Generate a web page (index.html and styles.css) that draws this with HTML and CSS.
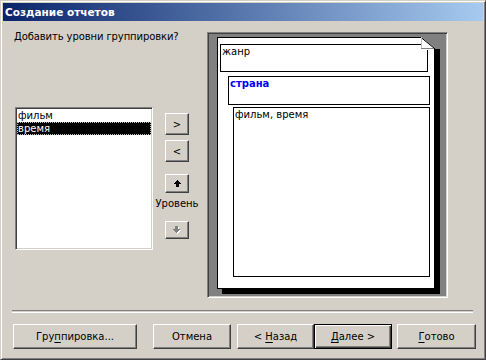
FILE: index.html
```html
<!DOCTYPE html>
<html lang="ru">
<head>
    <meta charset="UTF-8">
    <meta name="viewport" content="width=device-width, initial-scale=1.0">
    <title>Создание отчетов</title>
    <link rel="stylesheet" href="styles.css">
</head>
<body>
    <div class="window">
        <div class="titlebar">Создание отчетов</div>

        <div class="main">
            <div class="left">
                <p class="prompt">Добавить уровни группировки?</p>
                <div class="picker">
                    <ul class="listbox">
                        <li>фильм</li>
                        <li class="selected"><span>время</span></li>
                    </ul>
                    <div class="level-controls">
                        <button class="btn small btn-add">&gt;</button>
                        <button class="btn small btn-remove">&lt;</button>
                        <button class="btn small btn-up">
                            <svg width="7" height="7" viewBox="0 0 7 7" shape-rendering="crispEdges">
                                <rect x="3" y="0" width="1" height="1" fill="#000"/>
                                <rect x="2" y="1" width="3" height="1" fill="#000"/>
                                <rect x="1" y="2" width="5" height="1" fill="#000"/>
                                <rect x="0" y="3" width="7" height="1" fill="#000"/>
                                <rect x="2" y="4" width="3" height="3" fill="#000"/>
                            </svg>
                        </button>
                        <span class="level-label">Уровень</span>
                        <button class="btn small btn-down" disabled>
                            <svg width="8" height="8" viewBox="0 0 8 8" shape-rendering="crispEdges">
                                <rect x="3" y="1" width="3" height="3" fill="#fff"/>
                                <rect x="1" y="4" width="7" height="1" fill="#fff"/>
                                <rect x="2" y="5" width="5" height="1" fill="#fff"/>
                                <rect x="3" y="6" width="3" height="1" fill="#fff"/>
                                <rect x="4" y="7" width="1" height="1" fill="#fff"/>
                                <rect x="2" y="0" width="3" height="3" fill="#808080"/>
                                <rect x="0" y="3" width="7" height="1" fill="#808080"/>
                                <rect x="1" y="4" width="5" height="1" fill="#808080"/>
                                <rect x="2" y="5" width="3" height="1" fill="#808080"/>
                                <rect x="3" y="6" width="1" height="1" fill="#808080"/>
                            </svg>
                        </button>
                    </div>
                </div>
            </div>

            <div class="preview">
                <div class="page">
                    <svg class="fold" width="19" height="13" viewBox="0 0 19 13" shape-rendering="crispEdges">
                        <rect x="0" y="0" width="19" height="13" fill="#808080"/>
                        <polygon points="0,0 14,11.5 14,13 0,13" fill="#fff" shape-rendering="auto"/>
                        <line x1="0" y1="0.5" x2="13.5" y2="11.5" stroke="#000" stroke-width="1" shape-rendering="auto"/>
                        <rect x="13" y="11" width="1" height="2" fill="#000"/>
                        <rect x="0" y="0" width="1" height="11" fill="#c0c0c0"/>
                        <rect x="0" y="11" width="13" height="1" fill="#808080"/>
                        <rect x="14" y="12" width="5" height="1" fill="#000"/>
                    </svg>
                    <div class="band band-genre">жанр</div>
                    <div class="band band-country">страна</div>
                    <div class="band band-detail">фильм, время</div>
                </div>
            </div>
        </div>

        <div class="separator"></div>

        <div class="actions">
            <button class="btn btn-group">Гру<u>п</u>пировка...</button>
            <button class="btn btn-cancel">Отмена</button>
            <button class="btn btn-back">&lt; <u>Н</u>азад</button>
            <button class="btn btn-next default"><u>Д</u>алее &gt;</button>
            <button class="btn btn-finish"><u>Г</u>отово</button>
        </div>
    </div>
</body>
</html>
```

FILE: styles.css
```css
body {
    margin: 0;
    font-family: "DejaVu Sans", sans-serif;
    font-size: 10px;
    line-height: 13px;
    color: #000;
}

.window {
    width: 486px;
    height: 360px;
    box-sizing: border-box;
    background-color: #d4d0c8;
    border: 1px solid;
    border-color: #d4d0c8 #404040 #404040 #d4d0c8;
    box-shadow: inset 1px 1px #fff, inset -1px -1px #808080;
    padding: 2px;
}

.titlebar {
    height: 18px;
    line-height: 18px;
    padding-left: 2px;
    background: linear-gradient(to right, #0a246a, #a6caf0);
    color: #fff;
    font-weight: bold;
    font-size: 10.5px;
}

.main {
    display: flex;
    align-items: flex-start;
    padding: 9px 0 0 11px;
}

.left {
    width: 193px;
}

.prompt {
    margin: 0;
    letter-spacing: -0.1px;
}

.picker {
    display: flex;
    align-items: flex-start;
    margin-top: 64px;
}

.listbox {
    list-style: none;
    margin: 0 0 0 1px;
    padding: 1px 0 0;
    width: 138px;
    height: 143px;
    box-sizing: border-box;
    background-color: #fff;
    border: 1px solid;
    border-color: #808080 #fff #fff #808080;
    box-shadow: inset 1px 1px #404040, inset -1px -1px #d4d0c8;
}

.listbox li {
    height: 13px;
    margin: 0 1px;
    padding-left: 1px;
}

.listbox li.selected {
    background-color: #000;
    color: #fff;
    padding-left: 0;
    border: 1px dotted #bbb;
    height: 11px;
    line-height: 11px;
}

.level-controls {
    width: 44px;
    margin-left: 2px;
    padding-top: 6px;
    display: flex;
    flex-direction: column;
    align-items: center;
}

.btn {
    font: inherit;
    color: #000;
    background-color: #d4d0c8;
    padding: 0;
    border: 1px solid;
    border-color: #fff #404040 #404040 #fff;
    box-shadow: inset -1px -1px #808080;
    border-radius: 0;
    box-sizing: border-box;
}

.btn u {
    text-underline-offset: 2px;
}

.btn.small {
    width: 24px;
    height: 22px;
    display: flex;
    align-items: center;
    justify-content: center;
}

.btn-remove {
    margin-top: 5px;
}

.btn-up {
    margin-top: 12px;
    height: 19px !important;
}

.btn-up svg,
.btn-down svg {
    display: block;
}

.level-label {
    margin-top: 4px;
    white-space: nowrap;
}

.btn-down {
    margin-top: 11px;
    height: 18px !important;
}

.preview {
    margin-top: 2px;
    width: 241px;
    height: 266px;
    box-sizing: border-box;
    background-color: #808080;
    border: 1px solid;
    border-color: #808080 #fff #fff #808080;
    box-shadow: inset 1px 1px #404040, inset -1px -1px #d4d0c8;
    padding: 4px 0 0 9px;
}

.page {
    position: relative;
    width: 218px;
    height: 252px;
    box-sizing: border-box;
    background-color: #fff;
    border: 1px solid #000;
    box-shadow: 5px 5px 0 #000;
    padding-top: 6px;
}

.fold {
    position: absolute;
    left: 203px;
    top: -1px;
}

.band {
    box-sizing: border-box;
    border: 1px solid #000;
    padding: 0 0 0 1px;
}

.band-genre {
    margin-left: 2px;
    width: 208px;
    height: 28px;
}

.band-country {
    margin: 4px 0 0 10px;
    width: 202px;
    height: 29px;
    color: #0000ff;
    font-weight: bold;
}

.band-detail {
    margin: 2px 0 0 15px;
    width: 197px;
    height: 170px;
}

.separator {
    margin: 12px 10px 0 9px;
    height: 1px;
    border-top: 1px solid #808080;
    border-bottom: 1px solid #fff;
}

.actions {
    display: flex;
    padding: 11px 0 0 10px;
}

.actions .btn {
    height: 25px;
}

.btn-group {
    width: 124px;
}

.btn-cancel {
    width: 78px;
    margin-left: 16px;
}

.btn-back {
    width: 77px;
    margin-left: 6px;
}

.btn-next {
    width: 78px;
}

.btn-finish {
    width: 79px;
    margin-left: 5px;
}

.btn.default {
    border-color: #000;
    box-shadow: inset 1px 1px #fff, inset -1px -1px #404040, inset -2px -2px #808080;
}
```
